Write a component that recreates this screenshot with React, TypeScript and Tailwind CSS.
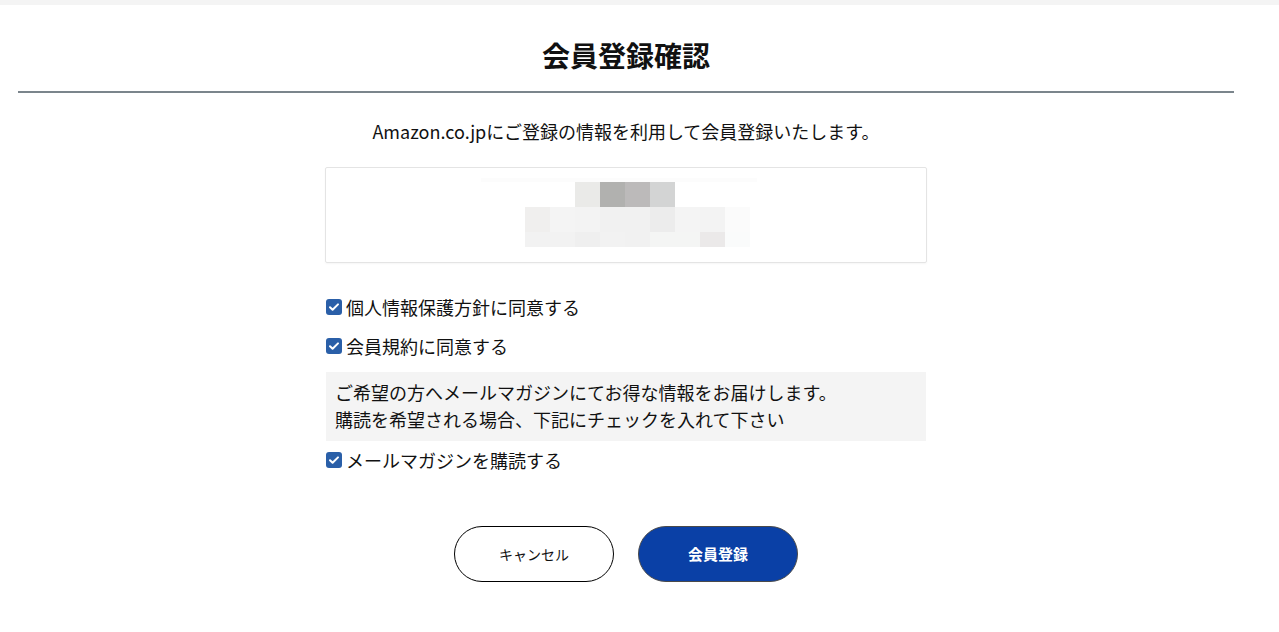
import React from 'react';

const font = { fontFamily: '"Noto Sans CJK JP", "Noto Sans", sans-serif' };

// mosaic that hides the registered name / email
const mosaic: { x: number; y: number; w: number; h: number; c: string }[] = [
  { x: -44, y: 0, w: 276, h: 4, c: '#fcfcfc' },
  { x: 50, y: 4, w: 25, h: 25, c: '#eaeae8' },
  { x: 75, y: 4, w: 25, h: 25, c: '#b1b1af' },
  { x: 100, y: 4, w: 25, h: 25, c: '#bcbaba' },
  { x: 125, y: 4, w: 25, h: 25, c: '#d3d4d4' },
  { x: 0, y: 29, w: 25, h: 25, c: '#f0efee' },
  { x: 25, y: 29, w: 25, h: 25, c: '#f4f4f4' },
  { x: 50, y: 29, w: 25, h: 25, c: '#f3f3f3' },
  { x: 75, y: 29, w: 50, h: 25, c: '#f1f1f1' },
  { x: 125, y: 29, w: 25, h: 25, c: '#ececec' },
  { x: 150, y: 29, w: 25, h: 25, c: '#f4f4f4' },
  { x: 175, y: 29, w: 25, h: 25, c: '#f3f3f3' },
  { x: 200, y: 29, w: 25, h: 25, c: '#fbfbfb' },
  { x: 0, y: 54, w: 50, h: 15, c: '#f2f2f2' },
  { x: 50, y: 54, w: 25, h: 15, c: '#efefef' },
  { x: 75, y: 54, w: 25, h: 15, c: '#f2f2f2' },
  { x: 100, y: 54, w: 25, h: 15, c: '#f1f1f1' },
  { x: 125, y: 54, w: 50, h: 15, c: '#f4f5f4' },
  { x: 175, y: 54, w: 25, h: 15, c: '#ebe9e9' },
  { x: 200, y: 54, w: 25, h: 15, c: '#fafbfb' },
];

const Check: React.FC<{ label: string }> = ({ label }) => (
  <label className="flex items-center gap-[4px] h-[28px] text-[18px] leading-[28px] text-[#111]">
    <span className="w-[16px] h-[16px] rounded-[3px] bg-[#2a5fa8] flex items-center justify-center">
      <svg width="12" height="12" viewBox="0 0 12 12" fill="none">
        <path d="M2 6.2l2.6 2.6L10 3.4" stroke="white" strokeWidth="2" strokeLinecap="round" strokeLinejoin="round" />
      </svg>
    </span>
    {label}
  </label>
);

const App: React.FC = () => {
  return (
    <div className="min-h-screen bg-white text-[#111]" style={font}>
      <div className="h-[5px] bg-[#f4f4f4]" />
      <div className="w-[1216px] ml-[18px] flex flex-col items-center">
        <h1 className="mt-[30px] text-[28px] leading-[40px] font-bold">会員登録確認</h1>
        <div className="mt-[16px] w-full h-[2px] bg-[#7b858c]" />

        <p className="mt-[25px] text-[18px] leading-[26px]">
          Amazon.co.jpにご登録の情報を利用して会員登録いたします。
        </p>

        <div className="mt-[23px] w-[602px] h-[96px] border border-[#e4e4e4] rounded-[2px] shadow-[0_1px_2px_rgba(0,0,0,0.04)] flex justify-center pt-[10px] pl-[22px]">
          <div className="relative w-[225px] h-[69px]">
            {mosaic.map((m, i) => (
              <div
                key={i}
                className="absolute"
                style={{ left: m.x, top: m.y, width: m.w, height: m.h, background: m.c }}
              />
            ))}
          </div>
        </div>

        <div className="w-[600px] mt-[30px] flex flex-col">
          <Check label="個人情報保護方針に同意する" />
          <div className="mt-[11px]">
            <Check label="会員規約に同意する" />
          </div>
          <div className="mt-[12px] bg-[#f4f4f4] px-[9px] pt-[7px] pb-[8px] text-[18px] leading-[27px]">
            <p>ご希望の方へメールマガジンにてお得な情報をお届けします。</p>
            <p>購読を希望される場合、下記にチェックを入れて下さい</p>
          </div>
          <div className="mt-[5px]">
            <Check label="メールマガジンを購読する" />
          </div>
        </div>

        <div className="mt-[52px] flex gap-[24px]">
          <button className="w-[160px] h-[56px] rounded-full border border-black bg-white text-[14px] font-normal text-[#111]">
            キャンセル
          </button>
          <button className="w-[160px] h-[56px] rounded-full border border-[#4a4a4a] bg-[#0a40a6] text-[15px] font-bold text-white">
            会員登録
          </button>
        </div>
      </div>
    </div>
  );
};

export default App;
